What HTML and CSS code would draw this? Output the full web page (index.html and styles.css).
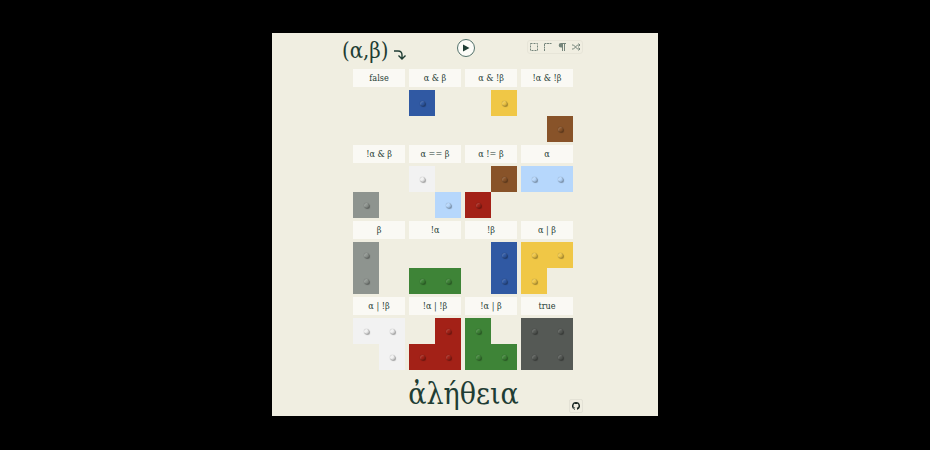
FILE: index.html
```html
<!DOCTYPE html>
<html lang="en">
<head>
<meta charset="utf-8">
<title>ἀλήθεια</title>
<link rel="stylesheet" href="styles.css">
</head>
<body>
<main class="stage">
  <header class="bar">
    <div class="signature"><span>(α,β)</span>
      <svg class="hook" viewBox="0 0 12 11" aria-hidden="true"><path stroke-width="1.4" d="M0 2h4q4 0 4 4V9.500M4.500 6.500l3.500 3.500 3.500-3.500"/></svg>
    </div>
    <button class="play" type="button" aria-label="Play"><svg viewBox="0 0 8 8" aria-hidden="true"><path d="M1 .5l6.500 3.500L1 7.500z"/></svg></button>
    <div class="tools">
      <button type="button" aria-label="Outline"><svg viewBox="0 0 10 10" aria-hidden="true"><path stroke-dasharray="2 1" d="M1.500 1.500h7v7h-7z"/></svg></button>
      <button type="button" aria-label="Corner"><svg viewBox="0 0 10 10" aria-hidden="true"><path stroke-dasharray="2 .5" d="M1.500 9V1.500H8.500"/></svg></button>
      <button type="button" aria-label="Labels"><svg viewBox="0 0 10 10" aria-hidden="true"><path d="M4 1.500H9M5.500 1.500v7.500M7.500 1.500v7.500"/><path class="solid" d="M5.500 1H4a2.300 2.300 0 0 0 0 4.600h1.500z"/></svg></button>
      <button type="button" aria-label="Shuffle"><svg viewBox="0 0 10 10" aria-hidden="true"><path d="M1 3h1.500l4 4H9M1 7h1.500l4-4H9M7.500 1.500L9 3 7.500 4.500M7.500 5.500L9 7 7.500 8.500"/></svg></button>
    </div>
  </header>
  <section class="grid">
    <figure><figcaption>false</figcaption><div class="board"></div></figure>
    <figure><figcaption>α &amp; β</figcaption><div class="board blue"><i class="tl"></i></div></figure>
    <figure><figcaption>α &amp; !β</figcaption><div class="board yellow"><i class="tr"></i></div></figure>
    <figure><figcaption>!α &amp; !β</figcaption><div class="board brown"><i class="br"></i></div></figure>

    <figure><figcaption>!α &amp; β</figcaption><div class="board gray"><i class="bl"></i></div></figure>
    <figure><figcaption>α == β</figcaption><div class="board"><i class="tl white"></i><i class="br sky"></i></div></figure>
    <figure><figcaption>α != β</figcaption><div class="board"><i class="tr brown"></i><i class="bl red"></i></div></figure>
    <figure><figcaption>α</figcaption><div class="board sky"><i class="tl"></i><i class="tr"></i></div></figure>

    <figure><figcaption>β</figcaption><div class="board gray"><i class="tl"></i><i class="bl"></i></div></figure>
    <figure><figcaption>!α</figcaption><div class="board green"><i class="bl"></i><i class="br"></i></div></figure>
    <figure><figcaption>!β</figcaption><div class="board blue"><i class="tr"></i><i class="br"></i></div></figure>
    <figure><figcaption>α | β</figcaption><div class="board yellow"><i class="tl"></i><i class="tr"></i><i class="bl"></i></div></figure>

    <figure><figcaption>α | !β</figcaption><div class="board white"><i class="tl"></i><i class="tr"></i><i class="br"></i></div></figure>
    <figure><figcaption>!α | !β</figcaption><div class="board red"><i class="tr"></i><i class="bl"></i><i class="br"></i></div></figure>
    <figure><figcaption>!α | β</figcaption><div class="board green"><i class="tl"></i><i class="bl"></i><i class="br"></i></div></figure>
    <figure><figcaption>true</figcaption><div class="board dark"><i class="tl"></i><i class="tr"></i><i class="bl"></i><i class="br"></i></div></figure>
  </section>
  <footer class="foot">
    <h1>ἀλήθεια</h1>
    <a class="github" href="#" aria-label="GitHub"><svg viewBox="0 0 16 16" aria-hidden="true"><path d="M8 0a8 8 0 0 0-2.530 15.590c.4.070.55-.17.55-.38v-1.490c-2.230.48-2.700-.94-2.700-.94-.36-.92-.89-1.170-.89-1.170-.73-.5.060-.49.060-.49.800.060 1.230.830 1.230.830.710 1.220 1.870.87 2.330.66.070-.52.280-.87.500-1.070-1.780-.2-3.640-.89-3.640-3.950 0-.87.310-1.590.820-2.150-.08-.2-.36-1.020.080-2.120 0 0 .67-.21 2.200.820a7.600 7.600 0 0 1 4 0c1.530-1.040 2.200-.82 2.200-.82.44 1.100.160 1.920.080 2.120.51.560.82 1.270.82 2.150 0 3.070-1.870 3.750-3.650 3.950.29.250.54.730.54 1.480v2.190c0 .21.150.46.550.38A8 8 0 0 0 8 0z"/></svg></a>
  </footer>
</main>
</body>
</html>
```
FILE: styles.css
```css
* { box-sizing: border-box; }

:root { --ink: #1f3d34; --paper: #f0eee1; }

body {
  margin: 0;
  padding: 33px 0 34px;
  background: #000;
  color: var(--ink);
  font-family: "DejaVu Serif Condensed", "DejaVu Serif", serif;
}

svg { display: block; fill: none; stroke: currentColor; }

button { padding: 0; background: none; color: inherit; }

.stage {
  max-width: 386px;
  margin: 0 auto;
  padding: 4px 69px 4px 70px;
  background: var(--paper);
}

.bar {
  display: grid;
  grid-template-columns: 1fr auto 1fr;
  height: 32px;
}

.signature {
  display: flex;
  font-size: 22px;
  line-height: 27px;
}

.hook { width: 12px; height: 11px; margin: 12px 0 0 5px; }

.play {
  display: grid;
  place-items: center;
  width: 18px;
  height: 18px;
  margin-top: 2px;
  border: 1px solid #52716b;
  border-radius: 50%;
  background: #fcfcf8;
}

.play svg { width: 8px; height: 8px; fill: var(--ink); stroke: none; }

.tools {
  display: flex;
  justify-self: end;
  align-items: center;
  gap: 4px;
  height: 14px;
  margin: 3px 6px 0 0;
  padding: 0 1px;
  border: 1px solid #e7e5d8;
  border-radius: 3px;
  color: #75857b;
}

.tools button { border: 0; }
.tools svg { width: 10px; height: 10px; }
.tools .solid { fill: currentColor; stroke: none; }

.grid {
  display: grid;
  grid-template-columns: repeat(4, 1fr);
  gap: 3px 4px;
  margin: 0 16px 0 11px;
}

figure { margin: 0; }

figcaption {
  height: 18px;
  margin-bottom: 3px;
  background: #faf9f4;
  font-size: 9px;
  line-height: 18px;
  text-align: center;
}

.board {
  display: grid;
  grid-template: repeat(2, 26px) / repeat(2, 1fr);
}

.board i { display: grid; place-items: center; background: var(--tone); }

.board i::after {
  content: "";
  width: 5px;
  height: 5px;
  border-radius: 50%;
  background: var(--tone);
  box-shadow: 0 0 1px rgba(0, 0, 0, 0.4), 1px 1px 1px rgba(0, 0, 0, 0.3), inset -1px -1px 1px rgba(0, 0, 0, 0.15), inset 1px 1px 1px rgba(255, 255, 255, 0.15);
}

.tl { grid-area: 1 / 1; }
.tr { grid-area: 1 / 2; }
.bl { grid-area: 2 / 1; }
.br { grid-area: 2 / 2; }

.blue { --tone: #3059a3; }
.yellow { --tone: #f0c746; }
.brown { --tone: #885329; }
.gray { --tone: #8e948f; }
.white { --tone: #f2f2f2; }
.sky { --tone: #b6d7fc; }
.red { --tone: #a32117; }
.green { --tone: #3e8437; }
.dark { --tone: #555955; }

.foot {
  display: grid;
  grid-template-columns: 1fr auto 1fr;
  height: 42px;
}

h1 {
  grid-column: 2;
  margin: 0 4px 0 0;
  font-size: 30px;
  font-weight: 400;
  line-height: 48px;
}

.github {
  display: grid;
  place-items: center;
  align-self: start;
  justify-self: end;
  width: 14px;
  height: 14px;
  margin: 29px 6px 0 0;
  border: 1px solid #e4e2d6;
  border-radius: 2px;
  color: #17251f;
}

.github svg { width: 8px; height: 8px; fill: currentColor; stroke: none; }
```
